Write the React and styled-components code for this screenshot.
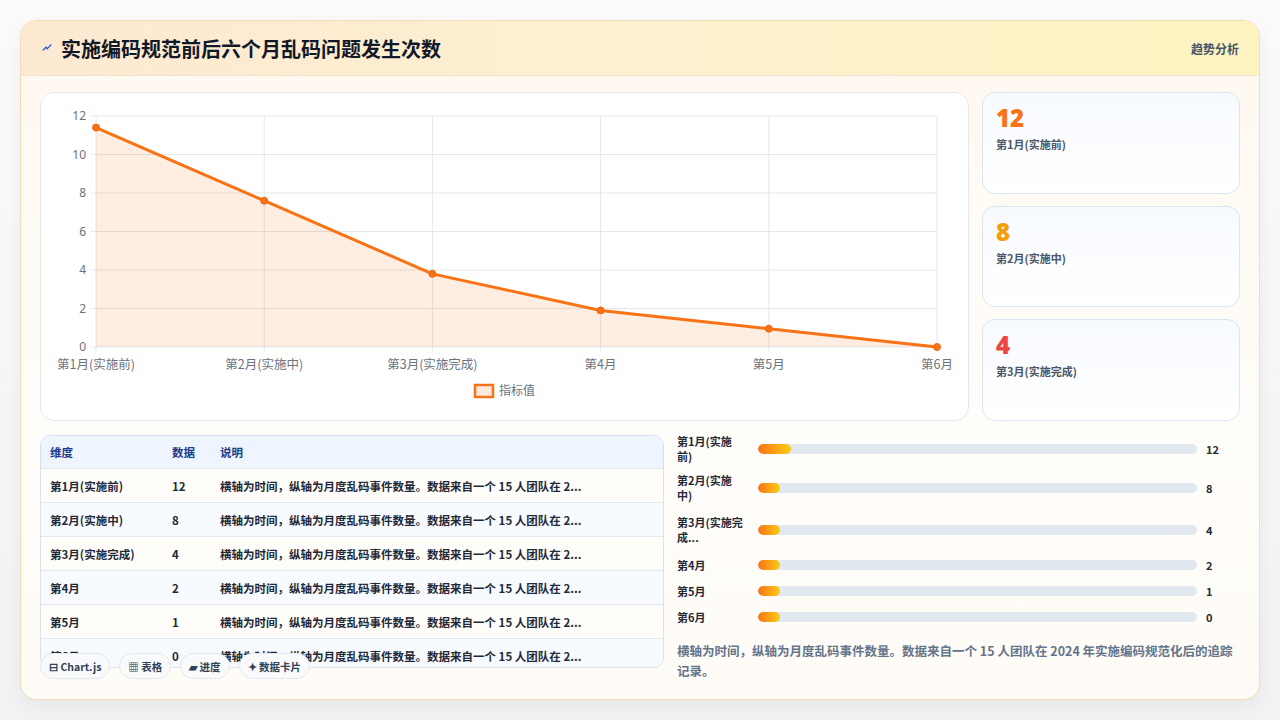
import React from 'react';
import styled, { createGlobalStyle } from 'styled-components';

const Global = createGlobalStyle`
  html, body { margin: 0; padding: 0; background: #f4f5f7; }
  body { font-family: "Noto Sans CJK SC", "Noto Sans", sans-serif; }
`;

const Page = styled.div`
  width: 1280px; height: 720px; box-sizing: border-box; padding: 20px 20px 20px 20px;
  background: linear-gradient(180deg, #fbfbfc, #f1f2f4);
`;
const Card = styled.div`
  height: 680px; box-sizing: border-box; border: 1px solid #f3dcb6; border-radius: 16px;
  background: linear-gradient(180deg, #fff8f0 0%, #fffdfa 60%, #fffcf7 100%);
  overflow: hidden; display: flex; flex-direction: column;
  box-shadow: 0 6px 20px rgba(0,0,0,0.05);
`;
const Header = styled.div`
  height: 54px; flex: none; display: flex; align-items: center; justify-content: space-between;
  padding: 0 20px 0 20px; border-bottom: 1px solid #f1e3cf;
  background: linear-gradient(90deg, #fde9d2 0%, #fdf0cf 50%, #fdf3c0 100%);
`;
const Title = styled.h1`
  margin: 0; font-size: 20px; font-weight: 700; color: #111827; display: flex; align-items: center; gap: 8px;
`;
const Tag = styled.span` font-size: 12px; font-weight: 700; color: #4b5563; `;
const Body = styled.div`
  flex: 1; padding: 16px 19px 0 19px; display: flex; flex-direction: column; gap: 14px;
`;
const Top = styled.div` display: flex; gap: 13px; height: 329px; `;
const ChartCard = styled.div`
  width: 929px; box-sizing: border-box; background: #fff; border: 1px solid #e3e8f0; border-radius: 14px; position: relative;
`;
const Stats = styled.div` flex: 1; display: flex; flex-direction: column; gap: 12px; `;
const Stat = styled.div`
  height: 102px; box-sizing: border-box; border: 1px solid #dbe5f1; border-radius: 13px;
  background: linear-gradient(180deg, #f7faff, #ffffff); padding: 9px 13px;
`;
const StatNum = styled.div` font-family: "Noto Sans", sans-serif; font-size: 24px; font-weight: 900; color: ${p => p.c}; line-height: 32px; `;
const StatLabel = styled.div` font-size: 11px; font-weight: 700; color: #4b5563; margin-top: 2px; `;
const Bottom = styled.div` display: flex; gap: 13px; position: relative; `;
const Table = styled.div`
  width: 624px; height: 233px; box-sizing: border-box; border: 1px solid #d6e2f0; border-radius: 10px; overflow: hidden; background: #fff;
`;
const Row = styled.div`
  display: grid; grid-template-columns: 122px 48px 1fr; height: 33px; align-items: center; padding-left: 9px;
  font-size: 11.5px; font-weight: 600; color: #1f2937; border-bottom: 1px solid #e3e9f1;
  background: ${p => p.head ? '#eef5ff' : p.alt ? '#f7faff' : '#fffdf9'};
  ${p => p.head && 'color: #1e3a8a; font-weight: 700; height: 32px;'}
`;
const Pills = styled.div` position: absolute; left: 0; top: 218px; display: flex; gap: 9px; `;
const Pill = styled.span`
  height: 26px; box-sizing: border-box; padding: 0 8px; border: 1px solid #e2e8f0; border-radius: 13px; background: #f8fafc;
  font-size: 10.5px; font-weight: 700; color: #334155; display: flex; align-items: center; gap: 3px;
`;
const Bars = styled.div` flex: 1; display: flex; flex-direction: column; margin-top: -4px; `;
const BarRow = styled.div`
  display: grid; grid-template-columns: 81px 439px 1fr; align-items: center; min-height: ${p => p.h}px;
  font-size: 11px; font-weight: 700; color: #1f2937;
`;
const BarLabel = styled.div` line-height: 15px; width: 66px; `;
const Track = styled.div` height: 10px; border-radius: 5px; background: #e2e8f0; overflow: hidden; `;
const Fill = styled.div` height: 100%; border-radius: 5px; background: linear-gradient(90deg, #f97316, #facc15); `;
const BarVal = styled.div` padding-left: 9px; `;
const Note = styled.p` margin: 10px 0 0; font-size: 12.5px; font-weight: 600; color: #64748b; line-height: 20px; `;

const pts = [11.4, 7.6, 3.8, 1.9, 0.95, 0];
const months = ['第1月(实施前)', '第2月(实施中)', '第3月(实施完成)', '第4月', '第5月', '第6月'];
const vals = [12, 8, 4, 2, 1, 0];
const desc = '横轴为时间，纵轴为月度乱码事件数量。数据来自一个 15 人团队在 2...';

function Chart() {
  const ox = 55, oy = 254, w = 841, h = 231;
  const X = i => ox + i * w / 5, Y = v => oy - v * h / 12;
  const line = pts.map((v, i) => `${X(i)},${Y(v)}`).join(' ');
  return (
    <svg width="929" height="329" style={{ display: 'block' }}>
      {[0, 2, 4, 6, 8, 10, 12].map(v => (
        <g key={v}>
          <line x1={ox - 5} x2={ox + w} y1={Y(v)} y2={Y(v)} stroke="#e5e7eb" />
          <text x={ox - 10} y={Y(v) + 4} textAnchor="end" fontSize="12" fill="#6b7280" fontFamily="Noto Sans">{v}</text>
        </g>
      ))}
      {[0, 1, 2, 3, 4, 5].map(i => (
        <g key={i}>
          <line x1={X(i)} x2={X(i)} y1={Y(12)} y2={oy + 5} stroke="#e5e7eb" />
          <text x={X(i)} y={276} textAnchor="middle" fontSize="12.5" fill="#6b7280" fontFamily="Noto Sans CJK SC">{months[i]}</text>
        </g>
      ))}
      <polygon points={`${ox},${oy} ${line} ${X(5)},${oy}`} fill="rgba(249,115,22,0.13)" />
      <polyline points={line} fill="none" stroke="#f97316" strokeWidth="3" strokeLinejoin="round" />
      {pts.map((v, i) => <circle key={i} cx={X(i)} cy={Y(v)} r="3.5" fill="#f97316" stroke="#ea6a10" />)}
      <rect x="434" y="292" width="18" height="12" fill="rgba(249,115,22,0.15)" stroke="#f97316" strokeWidth="2.5" />
      <text x="458" y="302" fontSize="12" fill="#6b7280" fontFamily="Noto Sans CJK SC">指标值</text>
    </svg>
  );
}

export default function App() {
  const heights = [36, 42, 42, 28, 24, 28];
  return (
    <Page>
      <Global />
      <Card>
        <Header>
          <Title>
            <svg width="12" height="12" viewBox="0 0 14 14"><path d="M2 10 L6 6 L7 8 L12 3" stroke="#3b5bdb" strokeWidth="1.5" fill="none" /></svg>
            实施编码规范前后六个月乱码问题发生次数
          </Title>
          <Tag>趋势分析</Tag>
        </Header>
        <Body>
          <Top>
            <ChartCard><Chart /></ChartCard>
            <Stats>
              <Stat><StatNum c="#f97316">12</StatNum><StatLabel>第1月(实施前)</StatLabel></Stat>
              <Stat><StatNum c="#f59e0b">8</StatNum><StatLabel>第2月(实施中)</StatLabel></Stat>
              <Stat><StatNum c="#ef4444">4</StatNum><StatLabel>第3月(实施完成)</StatLabel></Stat>
            </Stats>
          </Top>
          <Bottom>
            <Table>
              <Row head><span>维度</span><span>数据</span><span>说明</span></Row>
              {months.map((m, i) => (
                <Row key={m} alt={i % 2 === 1}><span>{m}</span><span>{vals[i]}</span><span>{desc}</span></Row>
              ))}
            </Table>
            <Pills>
              <Pill>⊟ Chart.js</Pill>
              <Pill>▦ 表格</Pill>
              <Pill>▰ 进度</Pill>
              <Pill>✦ 数据卡片</Pill>
            </Pills>
            <Bars>
              {months.map((m, i) => (
                <BarRow key={m} h={heights[i]}>
                  <BarLabel>{i === 2 ? '第3月(实施完成...' : m}</BarLabel>
                  <Track><Fill style={{ width: `${Math.max(vals[i] / 12 * 7.5, 5)}%` }} /></Track>
                  <BarVal>{vals[i]}</BarVal>
                </BarRow>
              ))}
              <Note>横轴为时间，纵轴为月度乱码事件数量。数据来自一个 15 人团队在 2024 年实施编码规范化后的追踪记录。</Note>
            </Bars>
          </Bottom>
        </Body>
      </Card>
    </Page>
  );
}
